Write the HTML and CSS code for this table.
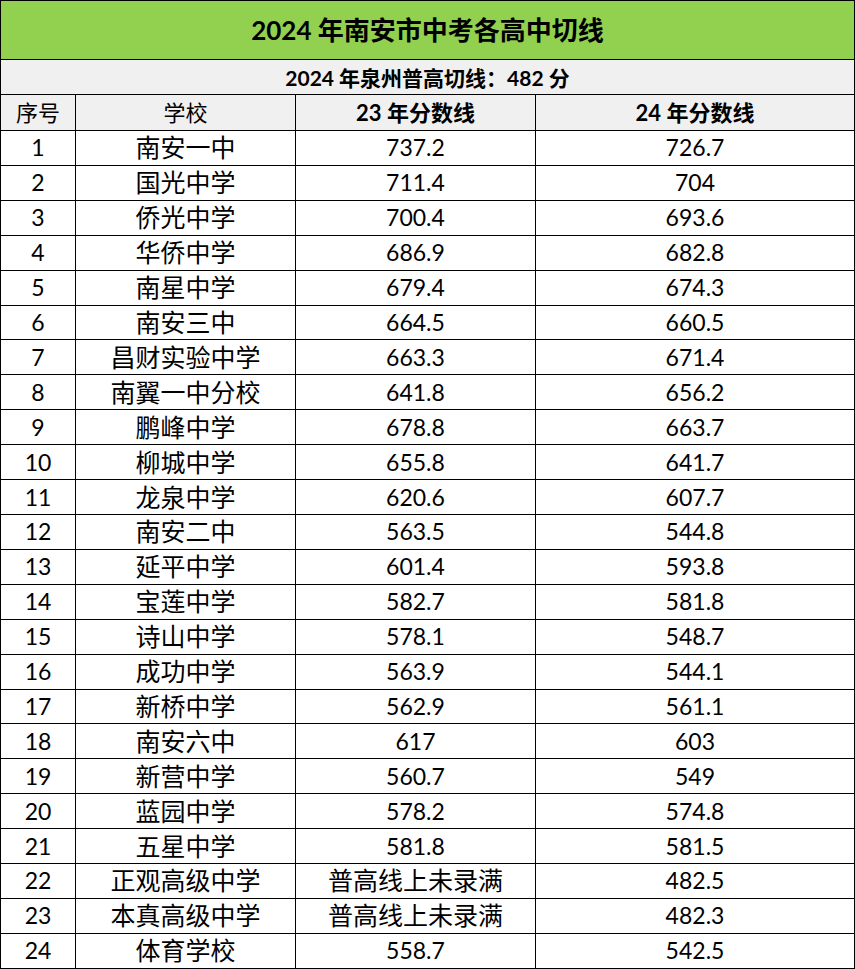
FILE: index.html
```html
<!DOCTYPE html>
<html lang="zh">
<head>
<meta charset="utf-8">
<title>2024 年南安市中考各高中切线</title>
<link rel="stylesheet" href="styles.css">
</head>
<body>
<table class="score-table">
  <colgroup>
    <col class="c-no">
    <col class="c-school">
    <col class="c-23">
    <col class="c-24">
  </colgroup>
  <thead>
    <tr class="title-row"><th colspan="4">2024 年南安市中考各高中切线</th></tr>
    <tr class="sub-row"><th colspan="4">2024 年泉州普高切线：482 分</th></tr>
    <tr class="head-row">
      <th class="light">序号</th>
      <th class="light">学校</th>
      <th>23 年分数线</th>
      <th>24 年分数线</th>
    </tr>
  </thead>
  <tbody>
    <tr><td>1</td><td>南安一中</td><td>737.2</td><td>726.7</td></tr>
    <tr><td>2</td><td>国光中学</td><td>711.4</td><td>704</td></tr>
    <tr><td>3</td><td>侨光中学</td><td>700.4</td><td>693.6</td></tr>
    <tr><td>4</td><td>华侨中学</td><td>686.9</td><td>682.8</td></tr>
    <tr><td>5</td><td>南星中学</td><td>679.4</td><td>674.3</td></tr>
    <tr><td>6</td><td>南安三中</td><td>664.5</td><td>660.5</td></tr>
    <tr><td>7</td><td>昌财实验中学</td><td>663.3</td><td>671.4</td></tr>
    <tr><td>8</td><td>南翼一中分校</td><td>641.8</td><td>656.2</td></tr>
    <tr><td>9</td><td>鹏峰中学</td><td>678.8</td><td>663.7</td></tr>
    <tr><td>10</td><td>柳城中学</td><td>655.8</td><td>641.7</td></tr>
    <tr><td>11</td><td>龙泉中学</td><td>620.6</td><td>607.7</td></tr>
    <tr><td>12</td><td>南安二中</td><td>563.5</td><td>544.8</td></tr>
    <tr><td>13</td><td>延平中学</td><td>601.4</td><td>593.8</td></tr>
    <tr><td>14</td><td>宝莲中学</td><td>582.7</td><td>581.8</td></tr>
    <tr><td>15</td><td>诗山中学</td><td>578.1</td><td>548.7</td></tr>
    <tr><td>16</td><td>成功中学</td><td>563.9</td><td>544.1</td></tr>
    <tr><td>17</td><td>新桥中学</td><td>562.9</td><td>561.1</td></tr>
    <tr><td>18</td><td>南安六中</td><td>617</td><td>603</td></tr>
    <tr><td>19</td><td>新营中学</td><td>560.7</td><td>549</td></tr>
    <tr><td>20</td><td>蓝园中学</td><td>578.2</td><td>574.8</td></tr>
    <tr><td>21</td><td>五星中学</td><td>581.8</td><td>581.5</td></tr>
    <tr><td>22</td><td>正观高级中学</td><td class="note">普高线上未录满</td><td>482.5</td></tr>
    <tr><td>23</td><td>本真高级中学</td><td class="note">普高线上未录满</td><td>482.3</td></tr>
    <tr><td>24</td><td>体育学校</td><td>558.7</td><td>542.5</td></tr>
  </tbody>
</table>
</body>
</html>
```
FILE: styles.css
```css
html, body {
  margin: 0;
  padding: 0;
  background: #ffffff;
}

.score-table {
  border-collapse: collapse;
  table-layout: fixed;
  width: 854px;
  font-family: "Lato", "Noto Sans CJK SC", sans-serif;
  color: #000;
}

.c-no { width: 75px; }
.c-school { width: 220px; }
.c-23 { width: 240px; }
.c-24 { width: 319px; }

.score-table th,
.score-table td {
  border: 1px solid #000;
  padding: 0;
  text-align: center;
  vertical-align: middle;
  line-height: 1;
  white-space: nowrap;
}

.title-row th {
  background: #92d050;
  height: 58px;
  font-size: 26px;
  font-weight: 700;
}

.sub-row th {
  background: #f0f0f0;
  height: 34px;
  font-size: 21px;
  font-weight: 700;
}

.head-row th {
  background: #f0f0f0;
  height: 35px;
  font-size: 22px;
  font-weight: 700;
}

.head-row th.light {
  font-weight: 400;
}

.score-table td {
  height: 33.92px;
  font-size: 23px;
}

.score-table td:nth-child(2),
.score-table td.note {
  font-size: 25px;
}
```
